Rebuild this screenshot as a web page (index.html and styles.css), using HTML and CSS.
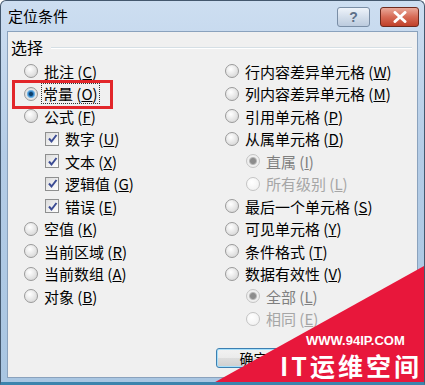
FILE: index.html
```html
<!DOCTYPE html>
<html lang="zh-CN">
<head>
    <meta charset="UTF-8">
    <title>定位条件</title>
    <link rel="stylesheet" href="styles.css">
</head>
<body>
    <div class="window">
        <div class="titlebar">
            <span class="title">定位条件</span>
            <div class="caption-btns">
                <div class="cap help">?</div>
                <div class="cap close">
                    <svg width="16" height="12" viewBox="0 0 16 12"><path d="M3 1.5 L13 10.5 M13 1.5 L3 10.5" stroke="#fff" stroke-width="3" stroke-linecap="round"/></svg>
                </div>
            </div>
        </div>

        <div class="client">
            <div class="group-head">
                <span>选择</span>
                <span class="rule"></span>
            </div>

            <div class="cols">
                <div class="col">
                    <div class="opt"><span class="radio"></span>批注 (<u>C</u>)</div>
                    <div class="opt marked"><span class="radio on"></span><span class="focus">常量 (<u>O</u>)</span><span class="mark-box"></span></div>
                    <div class="opt"><span class="radio"></span>公式 (<u>F</u>)</div>
                    <div class="opt sub"><span class="check"><svg width="11" height="11" viewBox="0 0 11 11"><path d="M2 5.5 L4.5 8.5 L9.5 2" fill="none" stroke="#3c4c94" stroke-width="2"/></svg></span>数字 (<u>U</u>)</div>
                    <div class="opt sub"><span class="check"><svg width="11" height="11" viewBox="0 0 11 11"><path d="M2 5.5 L4.5 8.5 L9.5 2" fill="none" stroke="#3c4c94" stroke-width="2"/></svg></span>文本 (<u>X</u>)</div>
                    <div class="opt sub"><span class="check"><svg width="11" height="11" viewBox="0 0 11 11"><path d="M2 5.5 L4.5 8.5 L9.5 2" fill="none" stroke="#3c4c94" stroke-width="2"/></svg></span>逻辑值 (<u>G</u>)</div>
                    <div class="opt sub"><span class="check"><svg width="11" height="11" viewBox="0 0 11 11"><path d="M2 5.5 L4.5 8.5 L9.5 2" fill="none" stroke="#3c4c94" stroke-width="2"/></svg></span>错误 (<u>E</u>)</div>
                    <div class="opt"><span class="radio"></span>空值 (<u>K</u>)</div>
                    <div class="opt"><span class="radio"></span>当前区域 (<u>R</u>)</div>
                    <div class="opt"><span class="radio"></span>当前数组 (<u>A</u>)</div>
                    <div class="opt"><span class="radio"></span>对象 (<u>B</u>)</div>
                </div>
                <div class="col">
                    <div class="opt"><span class="radio"></span>行内容差异单元格 (<u>W</u>)</div>
                    <div class="opt"><span class="radio"></span>列内容差异单元格 (<u>M</u>)</div>
                    <div class="opt"><span class="radio"></span>引用单元格 (<u>P</u>)</div>
                    <div class="opt"><span class="radio"></span>从属单元格 (<u>D</u>)</div>
                    <div class="opt sub disabled"><span class="radio on"></span>直属 (<u>I</u>)</div>
                    <div class="opt sub disabled light"><span class="radio"></span>所有级别 (<u>L</u>)</div>
                    <div class="opt"><span class="radio"></span>最后一个单元格 (<u>S</u>)</div>
                    <div class="opt"><span class="radio"></span>可见单元格 (<u>Y</u>)</div>
                    <div class="opt"><span class="radio"></span>条件格式 (<u>T</u>)</div>
                    <div class="opt"><span class="radio"></span>数据有效性 (<u>V</u>)</div>
                    <div class="opt sub disabled"><span class="radio on"></span>全部 (<u>L</u>)</div>
                    <div class="opt sub disabled light"><span class="radio"></span>相同 (<u>E</u>)</div>
                </div>
            </div>

            <div class="buttons">
                <div class="btn default">确定</div>
                <div class="btn">取消</div>
            </div>
        </div>

        <div class="watermark">
            <div class="wm-url">WWW.94IP.COM</div>
            <div class="wm-name">IT运维空间</div>
        </div>
    </div>
</body>
</html>
```

FILE: styles.css
```css
body {
    margin: 0;
    font-family: "Noto Sans CJK SC", "Liberation Sans", sans-serif;
    background: #ffffff;
}

.window {
    position: relative;
    width: 425px;
    height: 385px;
    box-sizing: border-box;
    display: flex;
    flex-direction: column;
    background: linear-gradient(#cddef1, #b4cce6 40%, #a9c6e2);
    border: 1px solid #44586e;
    border-bottom: 3px solid #3c84ad;
    border-radius: 6px 6px 0 0;
    overflow: hidden;
}

.titlebar {
    height: 30px;
    display: flex;
    align-items: center;
    justify-content: space-between;
    padding: 0 5px 0 7px;
    flex-shrink: 0;
}

.title {
    font-size: 15px;
    color: #000;
    margin-top: -2px;
}

.caption-btns {
    display: flex;
    gap: 10px;
    align-self: flex-start;
    margin-top: 6px;
}

.cap {
    height: 18px;
    border-radius: 3px;
    display: flex;
    align-items: center;
    justify-content: center;
}

.help {
    width: 31px;
    background: linear-gradient(#eef3fa, #d3deeb 50%, #bccbde);
    border: 1px solid #7a8ea6;
    color: #5d7088;
    font-family: "Liberation Sans", sans-serif;
    font-weight: bold;
    font-size: 14px;
}

.close {
    width: 37px;
    background: linear-gradient(#eaa99a, #d66a55 50%, #c0412a);
    border: 1px solid #6e2a1e;
}

.client {
    flex: 1;
    margin: 0 6px 4px 6px;
    background: #f0f0f0;
    border: 1px solid #8aa2bd;
    padding: 4px 0 0 0;
    display: flex;
    flex-direction: column;
    font-size: 15px;
    color: #000;
}

.group-head {
    display: flex;
    align-items: center;
    height: 22px;
    padding-left: 3px;
    padding-right: 5px;
    gap: 8px;
    font-size: 16px;
}

.rule {
    flex: 1;
    height: 1px;
    background: #d5dfe5;
    border-bottom: 1px solid #ffffff;
    margin-top: 2px;
}

.cols {
    display: grid;
    grid-template-columns: 201px 1fr;
    padding-left: 16px;
    margin-top: 2px;
}

.opt {
    height: 22.5px;
    display: flex;
    align-items: center;
    white-space: nowrap;
}

.opt u {
    text-decoration: underline;
    text-underline-offset: 1px;
}

.sub {
    padding-left: 21px;
}

.disabled {
    color: #808080;
}

.disabled.light {
    color: #a6a6a6;
}

.radio {
    width: 12px;
    height: 12px;
    border-radius: 50%;
    border: 1px solid #9a9a9a;
    background: radial-gradient(circle at 40% 35%, #ffffff, #e2e2e2 60%, #cfcfcf);
    margin-right: 6px;
    flex-shrink: 0;
}

.radio.on {
    background: radial-gradient(circle, #0d3d66 0 1.5px, #2f7fc4 2.5px, #8ec8ee 4px, #e6e6e6 4.5px, #d4d4d4);
}

.disabled .radio {
    border-color: #c4c4c4;
    background: radial-gradient(circle at 40% 35%, #ffffff, #eeeeee);
}

.disabled .radio.on {
    background: radial-gradient(circle, #8c8c8c 0 2.5px, #b8b8b8 3.5px, #efefef 4.5px);
}

.check {
    width: 12px;
    height: 12px;
    border: 1px solid #8e8f8f;
    background: linear-gradient(135deg, #dcdcdc, #ffffff);
    margin-right: 6px;
    display: flex;
    align-items: center;
    justify-content: center;
    flex-shrink: 0;
}

.marked {
    position: relative;
}

.focus {
    outline: 1px dotted #333;
    outline-offset: 0;
    padding: 0 1px;
    margin-left: -2px;
    line-height: 19px;
}

.mark-box {
    position: absolute;
    left: -12px;
    top: -3px;
    width: 95px;
    height: 23px;
    border: 3px solid #e2262a;
}

.buttons {
    display: flex;
    gap: 8px;
    margin-top: 18px;
    padding-left: 208px;
}

.btn {
    width: 73px;
    height: 18px;
    border: 1px solid #707070;
    border-radius: 3px;
    background: linear-gradient(#f2f2f2, #ebebeb 50%, #dddddd 51%, #cfcfcf);
    font-size: 14px;
    display: flex;
    align-items: center;
    justify-content: center;
}

.btn.default {
    border-color: #3c7fb1;
    box-shadow: inset 0 0 0 1px #a6e0fb;
}

.watermark {
    position: absolute;
    left: 0;
    top: 0;
    width: 425px;
    height: 385px;
    background: #e8173b;
    clip-path: polygon(207px 385px, 425px 264px, 425px 385px);
}

.wm-url {
    position: absolute;
    left: 305px;
    top: 332px;
    color: #fff;
    font-family: "Liberation Sans", sans-serif;
    font-weight: bold;
    font-size: 13px;
    white-space: nowrap;
}

.wm-name {
    position: absolute;
    left: 279px;
    top: 348px;
    color: #fff;
    font-weight: bold;
    font-size: 25px;
    letter-spacing: 3px;
    line-height: 32px;
    white-space: nowrap;
}
```
